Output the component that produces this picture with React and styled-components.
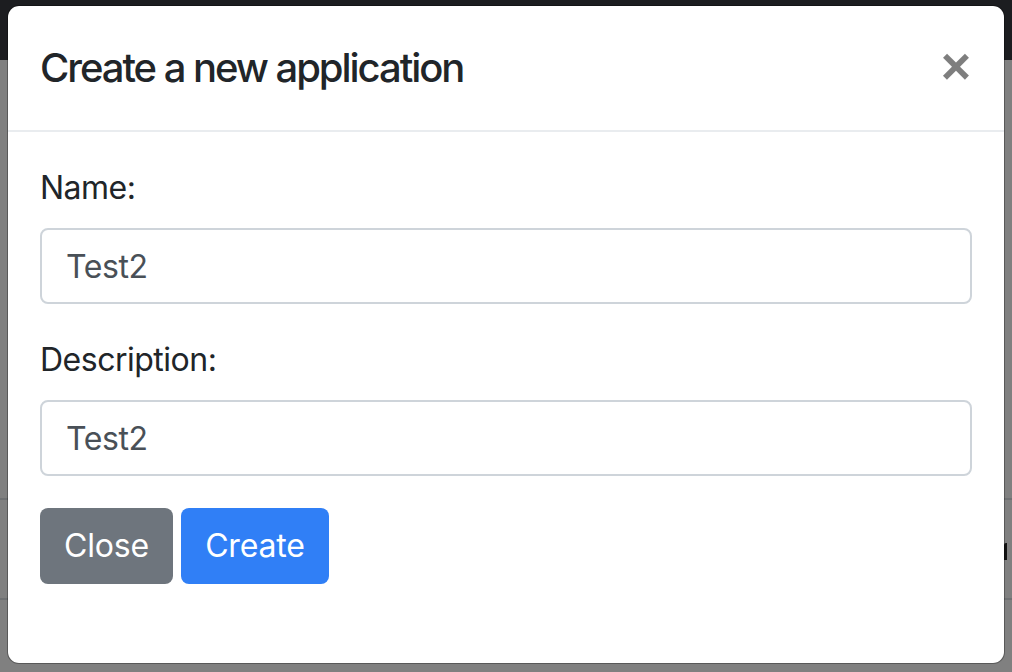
import React from "react";
import styled, { createGlobalStyle } from "styled-components";

const Global = createGlobalStyle`
  html, body { margin: 0; padding: 0; }
  body {
    width: 1012px;
    height: 672px;
    overflow: hidden;
    font-family: Inter, "Noto Sans", "Liberation Sans", sans-serif;
    background: #808080;
  }
  * { box-sizing: border-box; }
`;

const Page = styled.div`
  position: relative;
  width: 1012px;
  height: 672px;
  background: #808080;
  display: flex;
  flex-direction: column;
`;

const NavBar = styled.div`
  height: 60px;
  flex: none;
  background: #1c1d20;
`;

const PageBody = styled.div`
  flex: 1;
  display: flex;
  flex-direction: column;
  padding-top: 438px;
`;

const TableRow = styled.div`
  height: ${(p) => p.$h}px;
  border-top: 2px solid #6f7173;
  display: flex;
  justify-content: flex-end;
  align-items: flex-start;
`;

const Glyph = styled.div`
  width: 3px;
  height: 17px;
  margin-top: 43px;
  margin-right: 5px;
  background: #111;
  border-radius: 2px 0 0 0;
`;

const Overlay = styled.div`
  position: absolute;
  inset: 0;
  padding: 5px 0 0 7px;
`;

const Modal = styled.div`
  width: 998px;
  height: 659px;
  background: #fff;
  border: 1px solid rgba(0, 0, 0, 0.3);
  border-radius: 12px;
  background-clip: padding-box;
  display: flex;
  flex-direction: column;
  color: #212529;
`;

const Header = styled.div`
  display: flex;
  align-items: flex-start;
  justify-content: space-between;
  padding: 32px;
  border-bottom: 2px solid #e9ecef;
`;

const Title = styled.h5`
  margin: 0;
  font-size: 40px;
  font-weight: 500;
  line-height: 1.5;
  letter-spacing: -2.05px;
  color: #212529;
`;

const CloseX = styled.button`
  border: 0;
  background: transparent;
  padding: 0;
  margin: 2px 1px 0 0;
  font-family: "Liberation Sans", Arial, sans-serif;
  font-size: 52px;
  font-weight: 700;
  line-height: 1;
  color: #000;
  opacity: 0.5;
  cursor: pointer;
`;

const Body = styled.div`
  padding: 32px;
  display: flex;
  flex-direction: column;
`;

const Group = styled.div`
  display: flex;
  flex-direction: column;
  margin-bottom: 32px;
`;

const Label = styled.label`
  font-size: 32px;
  line-height: 48px;
  margin-bottom: 16px;
  letter-spacing: -0.5px;
  color: #212529;
`;

const Input = styled.input`
  height: 76px;
  width: 100%;
  padding: 12px 24px;
  font-family: inherit;
  font-size: 32px;
  line-height: 48px;
  letter-spacing: -0.4px;
  color: #495057;
  border: 2px solid #ced4da;
  border-radius: 8px;
  outline: none;
`;

const Buttons = styled.div`
  display: flex;
  gap: 8px;
`;

const Button = styled.button`
  height: 76px;
  padding: 12px 24px;
  font-family: inherit;
  font-size: 32px;
  line-height: 48px;
  letter-spacing: -0.15px;
  color: #fff;
  border: 0;
  border-radius: 8px;
  background: ${(p) => (p.$primary ? "#307ff6" : "#6e757d")};
  cursor: pointer;
`;

export default function App() {
  return (
    <>
      <Global />
      <Page>
        <NavBar />
        <PageBody>
          <TableRow $h={100}>
            <Glyph />
          </TableRow>
          <TableRow $h={80} />
        </PageBody>
        <Overlay>
          <Modal>
            <Header>
              <Title>Create a new application</Title>
              <CloseX aria-label="Close">×</CloseX>
            </Header>
            <Body>
              <Group>
                <Label>Name:</Label>
                <Input defaultValue="Test2" />
              </Group>
              <Group>
                <Label>Description:</Label>
                <Input defaultValue="Test2" />
              </Group>
              <Buttons>
                <Button>Close</Button>
                <Button $primary>Create</Button>
              </Buttons>
            </Body>
          </Modal>
        </Overlay>
      </Page>
    </>
  );
}
